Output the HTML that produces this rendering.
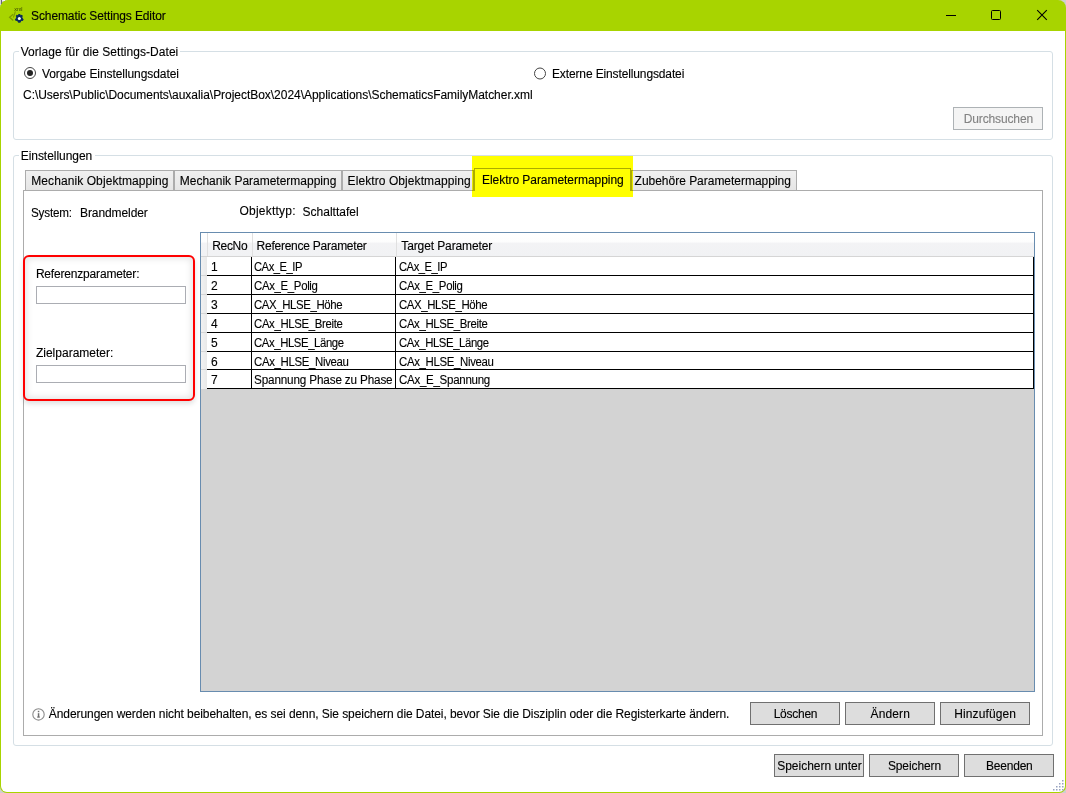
<!DOCTYPE html>
<html><head><meta charset="utf-8">
<style>
*{margin:0;padding:0;box-sizing:border-box}
html,body{width:1066px;height:793px;overflow:hidden;background:#cfcfcf}
body{position:relative;font-family:"Liberation Sans",sans-serif;font-size:12px;color:#000;-webkit-text-stroke:0.12px currentColor}
.a{position:absolute}
.t,.btn span{position:absolute;white-space:pre;line-height:14px;height:14px}
#win{position:absolute;left:0;top:0;width:1066px;height:793px;background:#a8d400;border-radius:8px 8px 7px 7px}
#client{position:absolute;left:1px;top:31px;width:1064px;height:761px;background:#fff;border-radius:0 0 6px 6px}
.gb{position:absolute;border:1px solid #d5dfe5;border-radius:3px}
.btn{position:absolute;border:1px solid #707070;background:#dddddd}
.tab{position:absolute;top:170px;height:20px;border:1px solid #acacac;border-bottom:none;background:linear-gradient(#f0f0f0,#e5e5e5)}
.tb{position:absolute;border:1px solid #abadb3;background:#fff;left:36px;width:150px;height:18px}
.hl{position:absolute;left:207px;width:827px;height:1px;background:#000}
.rh{position:absolute;left:201px;width:6px;height:1px;background:#d5d5d5}
</style></head><body>
<div id="win"><div id="client"></div></div>
<svg class="a" style="left:0;top:0" width="6" height="6"><rect x="0" y="0" width="1" height="5" fill="#d8d8d8"/><rect x="1" y="0" width="1" height="4" fill="#6a6a70"/><rect x="2" y="0" width="3" height="1" fill="#f4f4f8"/></svg>
<svg class="a" style="left:0;top:0" width="30" height="30">
  <text x="14.2" y="11" font-family="Liberation Sans" font-size="5.4" fill="#344400" style="-webkit-text-stroke:0">xml</text>
  <path d="M13.2 14.2 L9.6 17.3 L13.2 20.4" fill="none" stroke="#7d9a00" stroke-width="1.3"/>
  <path d="M15.4 11.4 L13.4 17.5" fill="none" stroke="#7d9a00" stroke-width="1.1"/>
  <g transform="translate(19.3 18.4)">
    <path d="M-0.9 -4.4 L0.9 -4.4 L1.3 -3.1 L2.6 -3.6 L3.6 -2.3 L2.8 -1.1 L3.6 0.2 L4.4 1.2 L3.5 2.6 L2.1 2.3 L1.5 3.6 L0.9 4.4 L-0.9 4.4 L-1.5 3.6 L-2.1 2.3 L-3.5 2.6 L-4.4 1.2 L-3.6 0.2 L-2.8 -1.1 L-3.6 -2.3 L-2.6 -3.6 L-1.3 -3.1 Z" fill="#0b2d5c"/>
    <circle cx="0" cy="0" r="3" fill="#0b2d5c"/>
    <circle cx="0" cy="0" r="1.5" fill="#fff"/>
  </g>
</svg>
<div class="t" style="left:31.1px;top:9px;letter-spacing:-0.117px">Schematic Settings Editor</div>
<svg class="a" style="left:0;top:0" width="1066" height="31">
  <rect x="946" y="15" width="10" height="1" fill="#000"/>
  <rect x="991.5" y="10.5" width="9" height="9" rx="1" fill="none" stroke="#000" stroke-width="1"/>
  <path d="M1037.2 10.2 L1046.8 19.8 M1046.8 10.2 L1037.2 19.8" stroke="#000" stroke-width="1.1"/>
</svg>
<div class="gb" style="left:13px;top:51px;width:1040px;height:89px"></div>
<div class="a" style="left:19px;top:46px;width:161px;height:10px;background:#fff"></div>
<div class="t" style="left:20.7px;top:45px;letter-spacing:0.052px">Vorlage für die Settings-Datei</div>
<svg class="a" style="left:0;top:60px" width="560" height="26">
  <circle cx="30" cy="13" r="5.5" fill="#fff" stroke="#444" stroke-width="1"/>
  <circle cx="30" cy="13" r="3" fill="#222"/>
  <circle cx="540" cy="13.5" r="5.5" fill="#fff" stroke="#444" stroke-width="1"/>
</svg>
<div class="t" style="left:41.9px;top:67px;letter-spacing:-0.069px">Vorgabe Einstellungsdatei</div>
<div class="t" style="left:552.0px;top:67px;letter-spacing:-0.130px">Externe Einstellungsdatei</div>
<div class="t" style="left:23.0px;top:88px;letter-spacing:-0.037px">C:\Users\Public\Documents\auxalia\ProjectBox\2024\Applications\SchematicsFamilyMatcher.xml</div>
<div class="btn" style="left:953px;top:107px;width:90px;height:23px;border-color:#adb2b5;background:#f4f4f4;color:#838383"><span style="position:absolute;left:9.8px;top:4px;letter-spacing:-0.141px">Durchsuchen</span></div>
<div class="gb" style="left:13px;top:155px;width:1040px;height:591px"></div>
<div class="a" style="left:19px;top:150px;width:76px;height:10px;background:#fff"></div>
<div class="t" style="left:20.7px;top:149px;letter-spacing:-0.046px">Einstellungen</div>
<div class="a" style="left:23px;top:190px;width:1020px;height:546px;border:1px solid #acacac;background:#fff"></div>
<div class="tab" style="left:25px;width:149px"></div>
<div class="tab" style="left:174px;width:168px"></div>
<div class="tab" style="left:342px;width:132px"></div>
<div class="tab" style="left:631px;width:166px"></div>
<div class="tab" style="left:474px;top:168px;width:157px;height:23px;background:#fff"></div>
<div class="t" style="left:31.2px;top:174px;letter-spacing:0.090px">Mechanik Objektmapping</div>
<div class="t" style="left:179.8px;top:174px;letter-spacing:-0.010px">Mechanik Parametermapping</div>
<div class="t" style="left:347.6px;top:174px;letter-spacing:0.080px">Elektro Objektmapping</div>
<div class="t" style="left:634.6px;top:174px;letter-spacing:-0.019px">Zubehöre Parametermapping</div>
<div class="t" style="left:482.0px;top:173px;letter-spacing:-0.045px">Elektro Parametermapping</div>
<div class="a" style="left:472px;top:156px;width:161px;height:41px;background:#ffff00;mix-blend-mode:multiply"></div>
<div class="t" style="left:31.2px;top:206px;letter-spacing:-0.198px;transform:scaleX(0.9726);transform-origin:0 0">System:</div>
<div class="t" style="left:80.0px;top:206px;letter-spacing:-0.090px">Brandmelder</div>
<div class="t" style="left:239.5px;top:204px;letter-spacing:0.220px">Objekttyp:</div>
<div class="t" style="left:302.5px;top:205px;letter-spacing:0.007px">Schalttafel</div>
<div class="a" style="left:23px;top:255px;width:172px;height:146px;border:2px solid #f00;border-radius:6px;background:#fff;box-shadow:inset 0 0 6px 2px rgba(0,0,0,0.10), 0 3px 5px rgba(0,0,0,0.12)"></div>
<div class="t" style="left:35.9px;top:267px;letter-spacing:-0.183px">Referenzparameter:</div>
<div class="tb" style="top:286px"></div>
<div class="t" style="left:35.9px;top:346px;letter-spacing:0.011px">Zielparameter:</div>
<div class="tb" style="top:365px"></div>
<div class="a" style="left:200px;top:232px;width:835px;height:460px;border:1px solid #688caf;background:#d3d3d3"></div>
<div class="a" style="left:201px;top:233px;width:833px;height:23px;background:linear-gradient(#ffffff 0,#fdfdfd 40%,#f3f3f5 43%,#f1f2f4 100%)"></div>
<div class="a" style="left:201px;top:256px;width:833px;height:1px;background:#d5d5d5"></div>
<div class="a" style="left:201px;top:257px;width:6px;height:132px;background:linear-gradient(90deg,#f1f1f1,#e9e9e9)"></div>
<div class="a" style="left:207px;top:233px;width:1px;height:23px;background:#e0e0e0"></div>
<div class="a" style="left:252px;top:233px;width:1px;height:23px;background:#e0e0e0"></div>
<div class="a" style="left:396px;top:233px;width:1px;height:23px;background:#e0e0e0"></div>
<div class="a" style="left:207px;top:257px;width:827px;height:132px;background:#fff"></div>
<div class="hl" style="top:275px"></div>
<div class="hl" style="top:294px"></div>
<div class="hl" style="top:313px"></div>
<div class="hl" style="top:332px"></div>
<div class="hl" style="top:351px"></div>
<div class="hl" style="top:369px"></div>
<div class="hl" style="top:388px"></div>
<div class="rh" style="top:275px"></div>
<div class="rh" style="top:294px"></div>
<div class="rh" style="top:313px"></div>
<div class="rh" style="top:332px"></div>
<div class="rh" style="top:351px"></div>
<div class="rh" style="top:369px"></div>
<div class="a" style="left:251px;top:257px;width:1px;height:132px;background:#000"></div>
<div class="a" style="left:395px;top:257px;width:1px;height:132px;background:#000"></div>
<div class="a" style="left:1033px;top:257px;width:1px;height:132px;background:#000"></div>
<div class="t" style="left:212.2px;top:239px;letter-spacing:-0.320px">RecNo</div>
<div class="t" style="left:256.6px;top:239px;letter-spacing:-0.251px">Reference Parameter</div>
<div class="t" style="left:401.3px;top:239px;letter-spacing:-0.114px">Target Parameter</div>
<div class="t" style="left:211px;top:260px">1</div>
<div class="t" style="left:254.2px;top:260px;letter-spacing:-0.514px;transform:scaleX(0.9350);transform-origin:0 0">CAx_E_IP</div>
<div class="t" style="left:398.9px;top:260px;letter-spacing:-0.514px;transform:scaleX(0.9350);transform-origin:0 0">CAx_E_IP</div>
<div class="t" style="left:211px;top:279px">2</div>
<div class="t" style="left:254.2px;top:279px;letter-spacing:-0.349px;transform:scaleX(0.9507);transform-origin:0 0">CAx_E_Polig</div>
<div class="t" style="left:398.9px;top:279px;letter-spacing:-0.349px;transform:scaleX(0.9507);transform-origin:0 0">CAx_E_Polig</div>
<div class="t" style="left:211px;top:298px">3</div>
<div class="t" style="left:254.2px;top:298px;letter-spacing:-0.404px;transform:scaleX(0.9506);transform-origin:0 0">CAX_HLSE_Höhe</div>
<div class="t" style="left:398.9px;top:298px;letter-spacing:-0.404px;transform:scaleX(0.9506);transform-origin:0 0">CAX_HLSE_Höhe</div>
<div class="t" style="left:211px;top:317px">4</div>
<div class="t" style="left:254.2px;top:317px;letter-spacing:-0.363px;transform:scaleX(0.9485);transform-origin:0 0">CAx_HLSE_Breite</div>
<div class="t" style="left:398.9px;top:317px;letter-spacing:-0.363px;transform:scaleX(0.9485);transform-origin:0 0">CAx_HLSE_Breite</div>
<div class="t" style="left:211px;top:336px">5</div>
<div class="t" style="left:254.2px;top:336px;letter-spacing:-0.424px;transform:scaleX(0.9452);transform-origin:0 0">CAx_HLSE_Länge</div>
<div class="t" style="left:398.9px;top:336px;letter-spacing:-0.424px;transform:scaleX(0.9452);transform-origin:0 0">CAx_HLSE_Länge</div>
<div class="t" style="left:211px;top:355px">6</div>
<div class="t" style="left:254.2px;top:355px;letter-spacing:-0.359px;transform:scaleX(0.9520);transform-origin:0 0">CAx_HLSE_Niveau</div>
<div class="t" style="left:398.9px;top:355px;letter-spacing:-0.359px;transform:scaleX(0.9520);transform-origin:0 0">CAx_HLSE_Niveau</div>
<div class="t" style="left:211px;top:373px">7</div>
<div class="t" style="left:254.2px;top:373px;letter-spacing:-0.157px;transform:scaleX(0.9762);transform-origin:0 0">Spannung Phase zu Phase</div>
<div class="t" style="left:398.9px;top:373px;letter-spacing:-0.296px;transform:scaleX(0.9611);transform-origin:0 0">CAx_E_Spannung</div>
<svg class="a" style="left:30px;top:706px" width="18" height="18">
  <circle cx="8.5" cy="8.4" r="5.7" fill="none" stroke="#8c8c8c" stroke-width="1.1"/>
  <rect x="7.8" y="7.2" width="1.5" height="4.2" fill="#6e6e6e"/>
  <rect x="7" y="10.6" width="3" height="0.9" fill="#6e6e6e"/>
  <rect x="7.8" y="4.8" width="1.5" height="1.4" fill="#6e6e6e"/>
</svg>
<div class="t" style="left:48.8px;top:707px;letter-spacing:-0.077px">Änderungen werden nicht beibehalten, es sei denn, Sie speichern die Datei, bevor Sie die Disziplin oder die Registerkarte ändern.</div>
<div class="btn" style="left:750px;top:702px;width:90px;height:23px"><span style="position:absolute;left:22.7px;top:4px;letter-spacing:-0.262px">Löschen</span></div>
<div class="btn" style="left:845px;top:702px;width:90px;height:23px"><span style="position:absolute;left:24.5px;top:4px;letter-spacing:0.141px">Ändern</span></div>
<div class="btn" style="left:940px;top:702px;width:90px;height:23px"><span style="position:absolute;left:13.3px;top:4px;letter-spacing:0.099px">Hinzufügen</span></div>
<div class="btn" style="left:774px;top:754px;width:90px;height:23px"><span style="position:absolute;left:2.2px;top:4px;letter-spacing:-0.016px">Speichern unter</span></div>
<div class="btn" style="left:869px;top:754px;width:90px;height:23px"><span style="position:absolute;left:17.9px;top:4px;letter-spacing:-0.104px">Speichern</span></div>
<div class="btn" style="left:964px;top:754px;width:90px;height:23px"><span style="position:absolute;left:20.9px;top:4px;letter-spacing:-0.191px">Beenden</span></div>
<svg class="a" style="left:1049.5px;top:776.5px" width="16" height="16">
  <g fill="#97a2bf">
    <rect x="12" y="3" width="1.5" height="1.5"/>
    <rect x="9" y="6" width="1.5" height="1.5"/><rect x="12" y="6" width="1.5" height="1.5"/>
    <rect x="6" y="9" width="1.5" height="1.5"/><rect x="9" y="9" width="1.5" height="1.5"/><rect x="12" y="9" width="1.5" height="1.5"/>
    <rect x="3" y="12" width="1.5" height="1.5"/><rect x="6" y="12" width="1.5" height="1.5"/><rect x="9" y="12" width="1.5" height="1.5"/><rect x="12" y="12" width="1.5" height="1.5"/>
  </g>
</svg>
</body></html>
